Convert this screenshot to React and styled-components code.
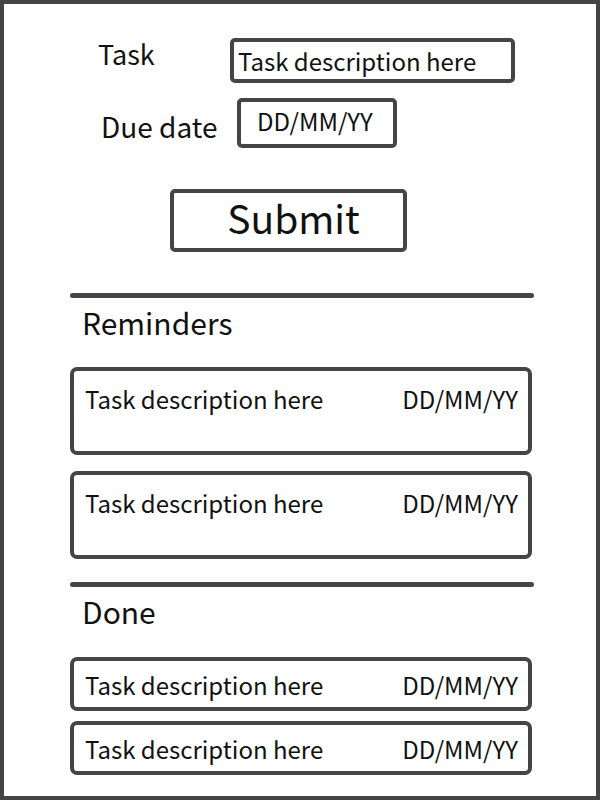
import styled, { createGlobalStyle } from "styled-components";

const GlobalStyle = createGlobalStyle`
  body {
    margin: 0;
    background: #fff;
    font-family: "Noto Sans CJK SC", "Noto Sans", sans-serif;
    color: #111;
  }
`;

const reminders = [
  { id: 1, text: "Task description here", date: "DD/MM/YY" },
  { id: 2, text: "Task description here", date: "DD/MM/YY" },
];

const done = [
  { id: 3, text: "Task description here", date: "DD/MM/YY" },
  { id: 4, text: "Task description here", date: "DD/MM/YY" },
];

export default function App() {
  return (
    <>
      <GlobalStyle />
      <Frame>
        <Form>
          <FieldRow $indent={94} $labelWidth={132}>
            <Label $nudge={0}>Task</Label>
            <TextBox $width={285} $height={45} $padTop={3}>Task description here</TextBox>
          </FieldRow>
          <FieldRow $indent={97} $labelWidth={136}>
            <Label $nudge={12} $size={28}>Due date</Label>
            <TextBox $width={160} $height={50} $pad={16}>DD/MM/YY</TextBox>
          </FieldRow>
        </Form>

        <SubmitButton>Submit</SubmitButton>

        <Section>
          <Divider />
          <SectionTitle>Reminders</SectionTitle>
          <CardList $gap={16} $top={27}>
            {reminders.map((item) => (
              <TaskCard key={item.id} $tall>
                <span>{item.text}</span>
                <span>{item.date}</span>
              </TaskCard>
            ))}
          </CardList>
        </Section>

        <Section $top={23}>
          <Divider />
          <SectionTitle>Done</SectionTitle>
          <CardList $gap={10} $top={28}>
            {done.map((item) => (
              <TaskCard key={item.id}>
                <span>{item.text}</span>
                <span>{item.date}</span>
              </TaskCard>
            ))}
          </CardList>
        </Section>
      </Frame>
    </>
  );
}

const Frame = styled.div`
  box-sizing: border-box;
  width: 600px;
  height: 800px;
  border: 4px solid #454545;
  padding-top: 34px;
  display: flex;
  flex-direction: column;
`;

const Form = styled.div`
  display: flex;
  flex-direction: column;
  gap: 15px;
`;

const FieldRow = styled.div`
  display: flex;
  align-items: flex-start;
  padding-left: ${(p) => p.$indent}px;

  & > :first-child {
    width: ${(p) => p.$labelWidth}px;
  }
`;

const Label = styled.div`
  font-size: ${(p) => p.$size || 27}px;
  line-height: 32px;
  margin-top: ${(p) => p.$nudge}px;
`;

const TextBox = styled.div`
  box-sizing: border-box;
  width: ${(p) => p.$width}px;
  height: ${(p) => p.$height}px;
  border: 4px solid #454545;
  border-radius: 5px;
  padding: ${(p) => p.$padTop ?? 3}px 0 0 ${(p) => p.$pad || 4}px;
  font-size: 24px;
  line-height: 32px;
`;

const SubmitButton = styled.div`
  box-sizing: border-box;
  margin: 41px 0 0 166px;
  width: 237px;
  height: 63px;
  border: 4px solid #454545;
  border-radius: 5px;
  display: flex;
  align-items: center;
  justify-content: center;
  font-size: 39px;
  padding-bottom: 8px;
  padding-left: 10px;
`;

const Section = styled.div`
  margin: ${(p) => p.$top || 41}px 0 0 66px;
  width: 464px;
  display: flex;
  flex-direction: column;
`;

const Divider = styled.div`
  height: 5px;
  border-radius: 3px;
  background: #454545;
`;

const SectionTitle = styled.div`
  margin: 6px 0 0 12px;
  font-size: 30px;
  line-height: 36px;
`;

const CardList = styled.div`
  display: flex;
  flex-direction: column;
  gap: ${(p) => p.$gap}px;
  margin: ${(p) => p.$top}px 2px 0 0;
`;

const TaskCard = styled.div`
  box-sizing: border-box;
  height: ${(p) => (p.$tall ? 88 : 54)}px;
  border: 4px solid #454545;
  border-radius: 7px;
  display: flex;
  justify-content: space-between;
  align-items: ${(p) => (p.$tall ? "flex-start" : "center")};
  padding: ${(p) => (p.$tall ? "12px 10px 0 11px" : "2px 10px 0 11px")};
  font-size: 24px;
  line-height: 32px;
`;
